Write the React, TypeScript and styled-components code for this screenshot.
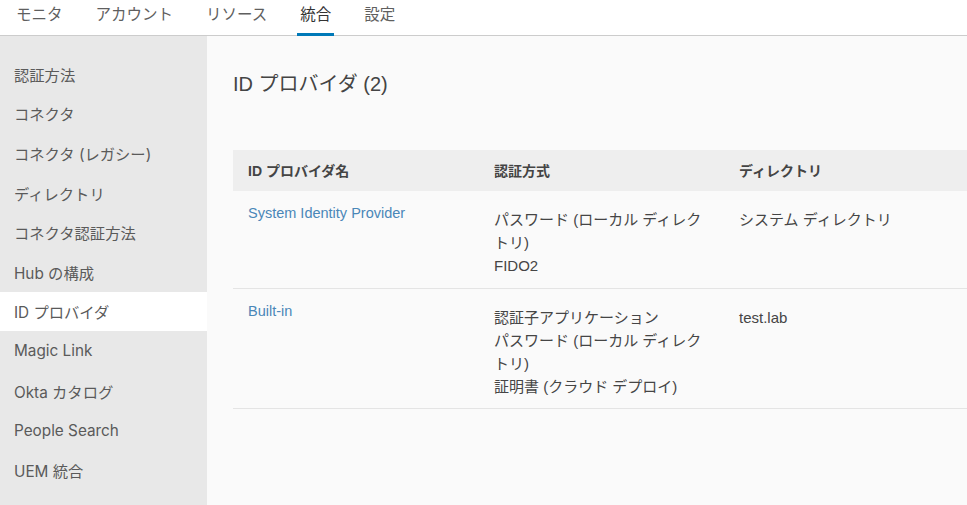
import React from "react";
import styled, { createGlobalStyle } from "styled-components";

const Global = createGlobalStyle`
  html, body { margin: 0; padding: 0; }
  body {
    background: #fafafa;
    font-family: "Inter", "Noto Sans CJK JP", sans-serif;
    color: #565656;
  }
  * { box-sizing: border-box; }
`;

const Page = styled.div`
  width: 967px;
  height: 505px;
  display: flex;
  flex-direction: column;
  overflow: hidden;
`;

const TopNav = styled.nav`
  height: 36px;
  flex: none;
  display: flex;
  gap: 27px;
  padding-left: 13px;
  background: #ffffff;
  border-bottom: 1px solid #cccccc;
`;

const Tab = styled.div<{ $active?: boolean }>`
  position: relative;
  padding: 0 3px 9px;
  height: 35px;
  display: flex;
  align-items: center;
  font-size: 15.5px;
  color: ${(p) => (p.$active ? "#333333" : "#5f5f5f")};
  &::after {
    content: "";
    display: ${(p) => (p.$active ? "block" : "none")};
    position: absolute;
    left: 0;
    right: 0;
    bottom: -1px;
    height: 3px;
    background: #0079b8;
  }
`;

const Body = styled.div`
  flex: 1;
  display: flex;
  min-height: 0;
`;

const Sidebar = styled.aside`
  width: 207px;
  flex: none;
  background: #e8e8e8;
  padding-top: 18px;
`;

const NavItem = styled.div<{ $active?: boolean }>`
  height: 39.6px;
  display: flex;
  align-items: center;
  padding-left: 14px;
  font-size: 15.3px;
  color: #5a5a5a;
  background: ${(p) => (p.$active ? "#ffffff" : "transparent")};
`;

const Main = styled.main`
  flex: 1;
  padding: 34px 0 0 26px;
  background: #fafafa;
  overflow: hidden;
`;

const Title = styled.h1`
  margin: 0;
  height: 28px;
  line-height: 28px;
  font-size: 20px;
  font-weight: 400;
  color: #444444;
  font-family: "Liberation Sans", "Noto Sans CJK JP", sans-serif;
`;

const Table = styled.div`
  margin-top: 52px;
  width: 760px;
  font-family: "Liberation Sans", "Noto Sans CJK JP", sans-serif;
`;

const Row = styled.div<{ $head?: boolean }>`
  display: grid;
  grid-template-columns: 246px 245px 1fr;
  background: ${(p) => (p.$head ? "#eeeeee" : "transparent")};
  border-bottom: 1px solid ${(p) => (p.$head ? "#eeeeee" : "#e4e4e4")};
`;

const HeadCell = styled.div`
  height: 40px;
  display: flex;
  align-items: center;
  padding: 0 15px;
  font-size: 14px;
  font-weight: 700;
  color: #444444;
`;

const Cell = styled.div<{ $inset?: boolean }>`
  padding: ${(p) => (p.$inset ? "17px" : "10px")} 15px 10.5px;
  font-size: 15px;
  line-height: 23px;
  color: #454545;
`;

const Link = styled.a`
  color: #4a87b8;
  text-decoration: none;
  font-size: 14.5px;
`;

const Line = styled.div``;

const tabs = ["モニタ", "アカウント", "リソース", "統合", "設定"];
const items = [
  "認証方法",
  "コネクタ",
  "コネクタ (レガシー)",
  "ディレクトリ",
  "コネクタ認証方法",
  "Hub の構成",
  "ID プロバイダ",
  "Magic Link",
  "Okta カタログ",
  "People Search",
  "UEM 統合",
];

const rows = [
  {
    name: "System Identity Provider",
    methods: ["パスワード (ローカル ディレクトリ)", "FIDO2"],
    dir: "システム ディレクトリ",
  },
  {
    name: "Built-in",
    methods: ["認証子アプリケーション", "パスワード (ローカル ディレクトリ)", "証明書 (クラウド デプロイ)"],
    dir: "test.lab",
  },
];

export default function App() {
  return (
    <Page>
      <Global />
      <TopNav>
        {tabs.map((t) => (
          <Tab key={t} $active={t === "統合"}>
            {t}
          </Tab>
        ))}
      </TopNav>
      <Body>
        <Sidebar>
          {items.map((i) => (
            <NavItem key={i} $active={i === "ID プロバイダ"}>
              {i}
            </NavItem>
          ))}
        </Sidebar>
        <Main>
          <Title>ID プロバイダ (2)</Title>
          <Table>
            <Row $head>
              <HeadCell>ID プロバイダ名</HeadCell>
              <HeadCell>認証方式</HeadCell>
              <HeadCell>ディレクトリ</HeadCell>
            </Row>
            {rows.map((r) => (
              <Row key={r.name}>
                <Cell>
                  <Link href="#">{r.name}</Link>
                </Cell>
                <Cell $inset>
                  {r.methods.map((m) => (
                    <Line key={m}>{m}</Line>
                  ))}
                </Cell>
                <Cell $inset>{r.dir}</Cell>
              </Row>
            ))}
          </Table>
        </Main>
      </Body>
    </Page>
  );
}
